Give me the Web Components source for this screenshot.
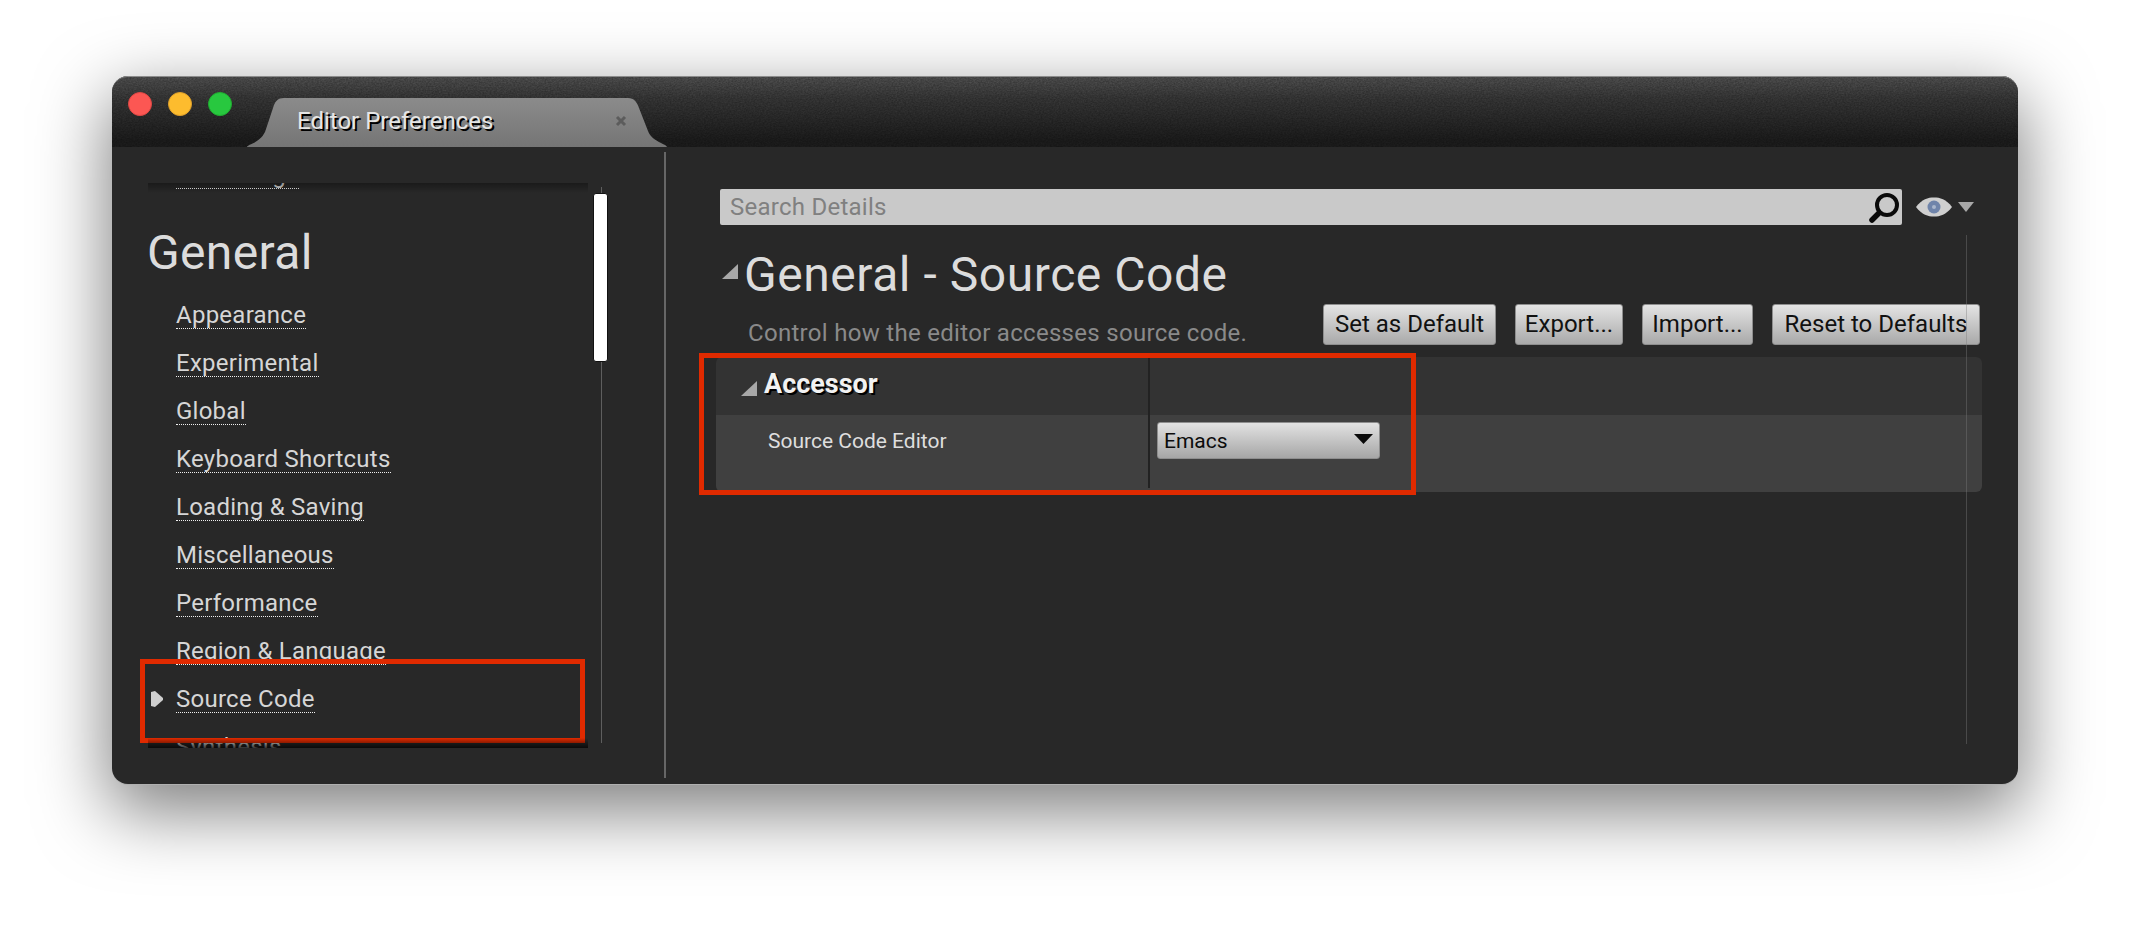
<!doctype html>
<html>
<head>
<meta charset="utf-8">
<title>Editor Preferences</title>
<style>
html, body { margin: 0; height: 100%; background: #fff; }
body { font-family: Roboto, "Liberation Sans", sans-serif; overflow: hidden; }
</style>
</head>
<body>
<app-window>
  <title-bar slot="title">
    <window-tab>Editor Preferences</window-tab>
  </title-bar>
  <pref-sidebar slot="side">
    <pref-link>Recordings</pref-link>
    <pref-heading>General</pref-heading>
    <pref-link>Appearance</pref-link>
    <pref-link>Experimental</pref-link>
    <pref-link>Global</pref-link>
    <pref-link>Keyboard Shortcuts</pref-link>
    <pref-link>Loading &amp; Saving</pref-link>
    <pref-link>Miscellaneous</pref-link>
    <pref-link>Performance</pref-link>
    <pref-link>Region &amp; Language</pref-link>
    <pref-link selected>Source Code</pref-link>
    <pref-link>Synthesis</pref-link>
  </pref-sidebar>
  <details-panel slot="main">
    <search-bar placeholder="Search Details"></search-bar>
    <section-title heading="General - Source Code" description="Control how the editor accesses source code.">
      <ue-button style="width:173px">Set as Default</ue-button>
      <ue-button style="width:108px">Export...</ue-button>
      <ue-button style="width:111px">Import...</ue-button>
      <ue-button style="width:208px">Reset to Defaults</ue-button>
    </section-title>
    <prop-table heading="Accessor" label="Source Code Editor">
      <ue-select>Emacs</ue-select>
    </prop-table>
  </details-panel>
</app-window>

<script>
const tri = `<svg width="16" height="15" viewBox="0 0 16 15"><path d="M16 0V15H0Z" fill="#a8a8a8"/></svg>`;

class AppWindow extends HTMLElement {
  constructor() {
    super();
    this.attachShadow({ mode: 'open' });
  }
  connectedCallback() {
    this.shadowRoot.innerHTML = `<style>
:host {
  display: flex;
  flex-direction: column;
  position: relative;
  width: 1906px;
  height: 708px;
  margin: 76px 0 0 112px;
  border-radius: 16px;
  background: #282828;
  box-shadow: 0 1px 0 #b0b0b0, 0 24px 70px 4px rgba(0,0,0,.5);
}
.body { display: flex; flex: 1; min-height: 0; }
.split { width: 2px; margin: 5px 0 6px; background: #666; }
.mark { position: absolute; border: 5px solid #e02a00; box-sizing: border-box; pointer-events: none; }
.a { left: 28px; top: 583px; width: 445px; height: 84px; }
.b { left: 587px; top: 277px; width: 717px; height: 142px; }
</style>
<slot name="title"></slot>
<div class="body">
  <slot name="side"></slot>
  <div class="split"></div>
  <slot name="main"></slot>
</div>
<div class="mark a"></div>
<div class="mark b"></div>`;
  }
}

class TitleBar extends HTMLElement {
  constructor() {
    super();
    this.attachShadow({ mode: 'open' });
  }
  connectedCallback() {
    this.shadowRoot.innerHTML = `<style>
:host {
  display: flex;
  align-items: flex-end;
  position: relative;
  height: 71px;
  flex: none;
  box-sizing: border-box;
  border-radius: 16px 16px 0 0;
  border-top: 1px solid #8c8c8c;
  background: linear-gradient(#565656, #3c3c3c 30%, #1f1f1f 90%);
  overflow: hidden;
}
.grain { position: absolute; inset: 0; width: 100%; height: 100%; opacity: .3; }
.lights { display: flex; gap: 16px; align-self: flex-start; margin: 15px 16px 0 16px; position: relative; }
.lights i { width: 24px; height: 24px; border-radius: 50%; box-sizing: border-box; }
.r { background: #fc5753; border: 1px solid #df4744; }
.y { background: #fdbc2e; border: 1px solid #de9f2a; }
.g { background: #28c83f; border: 1px solid #1fad30; }
::slotted(*) { position: relative; }
</style>
<svg class="grain"><filter id="n"><feTurbulence type="fractalNoise" baseFrequency="0.55 0.75" numOctaves="2"/><feColorMatrix values="0 0 0 0 0  0 0 0 0 0  0 0 0 0 0  1.500 0 0 0 -.2"/></filter><rect width="100%" height="100%" filter="url(#n)"/></svg>
<div class="lights"><i class="r"></i><i class="y"></i><i class="g"></i></div>
<slot></slot>`;
  }
}

class WindowTab extends HTMLElement {
  constructor() {
    super();
    this.attachShadow({ mode: 'open' });
  }
  connectedCallback() {
    this.shadowRoot.innerHTML = `<style>
:host {
  display: flex;
  align-items: center;
  justify-content: space-between;
  box-sizing: border-box;
  width: 420px;
  height: 49px;
  margin-left: -1px;
  padding: 0 40px 4px 50px;
  color: #e6e6e6;
  font-size: 24px;
  text-shadow: 2px 2px 0 #000;
  background: linear-gradient(#8b8b8b, #757575);
  clip-path: path("M0 49 C0 46 12 46 18 34 L26 10 C28 3 31 0 37 0 L381 0 C387 0 390 4 392 10 L401 33 C405 44 420 46 420 49 Z");
}
svg { flex: none; }
</style>
<span><slot></slot></span>
<svg width="12" height="12" viewBox="0 0 12 12"><path d="M2 2L10 10M10 2L2 10" stroke="#5c5c5c" stroke-width="3"/></svg>`;
  }
}

class PrefSidebar extends HTMLElement {
  constructor() {
    super();
    this.attachShadow({ mode: 'open' });
  }
  connectedCallback() {
    this.shadowRoot.innerHTML = `<style>
:host {
  display: flex;
  flex: none;
  position: relative;
  width: 552px;
  box-sizing: border-box;
  padding: 36px 0 36px 36px;
}
.view { position: relative; width: 440px; overflow: hidden; }
.list { margin-top: -21px; }
.view::before, .view::after {
  content: "";
  position: absolute;
  left: 0;
  right: 0;
  height: 10px;
  z-index: 1;
}
.view::before { top: 0; background: linear-gradient(rgba(0,0,0,.35), transparent); }
.view::after { bottom: 0; background: linear-gradient(transparent, rgba(0,0,0,.75)); }
.track { position: relative; width: 1px; margin: 4px 0 5px 13px; background: #5e5e5e; }
.thumb {
  position: absolute;
  left: -8px;
  top: 6px;
  width: 13px;
  height: 167px;
  background: #fff;
  border: 1px solid #111;
  border-radius: 3px;
}
</style>
<div class="view"><div class="list"><slot></slot></div></div>
<div class="track"><div class="thumb"></div></div>`;
  }
}

class PrefHeading extends HTMLElement {
  constructor() {
    super();
    this.attachShadow({ mode: 'open' });
  }
  connectedCallback() {
    this.shadowRoot.innerHTML = `<style>
:host {
  display: block;
  margin: 15px 0 21px -1px;
  font-size: 48px;
  line-height: 56px;
  letter-spacing: .35px;
  color: #dcdcdc;
}
</style><slot></slot>`;
  }
}

class PrefLink extends HTMLElement {
  constructor() {
    super();
    this.attachShadow({ mode: 'open' });
  }
  connectedCallback() {
    this.shadowRoot.innerHTML = `<style>
:host {
  display: block;
  position: relative;
  height: 48px;
  padding-left: 28px;
  color: #d6d6d6;
  font-size: 24px;
  line-height: 26px;
  letter-spacing: .25px;
}
span { display: inline-block; border-bottom: 1px dotted #f0f0f0; }
svg { position: absolute; left: 3px; top: 5px; }
</style>
${this.hasAttribute('selected') ? `<svg width="12" height="16" viewBox="0 0 12 16"><path d="M0 1L4 0L12 7V9L4 16L0 15Z" fill="#cfcfcf"/></svg>` : ''}
<span><slot></slot></span>`;
  }
}

class DetailsPanel extends HTMLElement {
  constructor() {
    super();
    this.attachShadow({ mode: 'open' });
  }
  connectedCallback() {
    this.shadowRoot.innerHTML = `<style>
:host {
  display: block;
  position: relative;
  flex: 1;
  min-width: 0;
  box-sizing: border-box;
  padding: 42px 36px 0 50px;
}
.rule {
  position: absolute;
  left: 1300px;
  top: 88px;
  width: 1px;
  height: 509px;
  background: rgba(125,125,125,.4);
}
</style>
<slot></slot>
<div class="rule"></div>`;
  }
}

class SearchBar extends HTMLElement {
  constructor() {
    super();
    this.attachShadow({ mode: 'open' });
  }
  connectedCallback() {
    this.shadowRoot.innerHTML = `<style>
:host { display: flex; align-items: center; margin-left: 4px; height: 36px; }
.box {
  display: flex;
  align-items: center;
  justify-content: space-between;
  width: 1182px;
  height: 36px;
  box-sizing: border-box;
  padding: 0 1px 0 10px;
  background: #c9c9c9;
  border-radius: 2px;
  color: #808080;
  font-size: 24px;
  letter-spacing: .25px;
}
.eye { margin-left: 13px; filter: blur(.6px); }
.caret { margin-left: 5px; filter: blur(.4px); }
</style>
<div class="box">
  <span>${this.getAttribute('placeholder')}</span>
  <svg width="34" height="34" viewBox="0 0 34 34"><circle cx="20" cy="15" r="10" fill="none" stroke="#0a0a0a" stroke-width="4"/><path d="M12 23L5 30" stroke="#0a0a0a" stroke-width="5.500" stroke-linecap="round"/></svg>
</div>
<svg class="eye" width="38" height="22" viewBox="0 0 38 22"><path d="M1 11C7 3 13 1.500 19 1.500S31 3 37 11C31 19 25 20.500 19 20.500S7 19 1 11Z" fill="#cfcfcf"/><circle cx="19" cy="11" r="6.500" fill="#6f84aa"/><circle cx="19" cy="11" r="2" fill="#a9b6cc"/></svg>
<svg class="caret" width="16" height="10" viewBox="0 0 16 10"><path d="M0 0H16L8 10Z" fill="#a8a8a8"/></svg>`;
  }
}

class SectionTitle extends HTMLElement {
  constructor() {
    super();
    this.attachShadow({ mode: 'open' });
  }
  connectedCallback() {
    this.shadowRoot.innerHTML = `<style>
:host { display: block; margin-top: 22px; }
.head { display: flex; padding-left: 6px; height: 57px; }
.head svg { margin-top: 17px; flex: none; }
h1 {
  margin: 0 0 0 6px;
  font-size: 48px;
  font-weight: 400;
  line-height: 56px;
  letter-spacing: .55px;
  color: #dcdcdc;
}
.row { display: flex; justify-content: space-between; padding-right: 2px; height: 41px; }
p {
  margin: 15px 0 0 32px;
  font-size: 24px;
  line-height: 28px;
  letter-spacing: .3px;
  color: #8a8a8a;
}
.btns { display: flex; gap: 19px; }
</style>
<div class="head">${tri}<h1>${this.getAttribute('heading')}</h1></div>
<div class="row">
  <p>${this.getAttribute('description')}</p>
  <div class="btns"><slot></slot></div>
</div>`;
  }
}

class UeButton extends HTMLElement {
  constructor() {
    super();
    this.attachShadow({ mode: 'open' });
  }
  connectedCallback() {
    this.shadowRoot.innerHTML = `<style>
:host {
  display: block;
  height: 41px;
  box-sizing: border-box;
  text-align: center;
  white-space: nowrap;
  font-size: 24px;
  line-height: 39px;
  color: #111;
  background: linear-gradient(#e4e4e4, #a9a9a9);
  border: 1px solid #8e8e8e;
  border-radius: 3px;
}
</style><slot></slot>`;
  }
}

class PropTable extends HTMLElement {
  constructor() {
    super();
    this.attachShadow({ mode: 'open' });
  }
  connectedCallback() {
    this.shadowRoot.innerHTML = `<style>
:host { display: block; margin-top: 12px; border-radius: 6px; overflow: hidden; }
.row { display: flex; }
.head { height: 58px; background: #333; }
.body { height: 77px; background: #404040; }
.name { box-sizing: border-box; border-right: 2px solid #222; flex: none; width: 434px; }
.head .name {
  display: flex;
  padding: 13px 0 0 25px;
  gap: 7px;
  color: #f2f2f2;
  font-size: 27px;
  font-weight: 700;
  line-height: 28px;
  text-shadow: 2px 2px 0 #000;
}
.head svg { margin-top: 11px; flex: none; }
.body .name {
  height: 73px;
  padding: 14px 0 0 52px;
  color: #dedede;
  font-size: 21px;
  line-height: 24px;
}
.value { padding: 7px 0 0 7px; }
</style>
<div class="row head"><div class="name">${tri}<span>${this.getAttribute('heading')}</span></div></div>
<div class="row body">
  <div class="name">${this.getAttribute('label')}</div>
  <div class="value"><slot></slot></div>
</div>`;
  }
}

class UeSelect extends HTMLElement {
  constructor() {
    super();
    this.attachShadow({ mode: 'open' });
  }
  connectedCallback() {
    this.shadowRoot.innerHTML = `<style>
:host {
  display: flex;
  align-items: center;
  justify-content: space-between;
  box-sizing: border-box;
  width: 223px;
  height: 37px;
  padding: 0 6px 0 6px;
  font-size: 21px;
  color: #0c0c0c;
  background: linear-gradient(#e2e2e2, #a6a6a6);
  border: 1px solid #8e8e8e;
  border-radius: 3px;
}
svg { margin-top: -4px; }
</style>
<span><slot></slot></span>
<svg width="19" height="10" viewBox="0 0 19 10"><path d="M0 0H19L9.500 10Z" fill="#0a0a0a"/></svg>`;
  }
}

customElements.define('app-window', AppWindow);
customElements.define('title-bar', TitleBar);
customElements.define('window-tab', WindowTab);
customElements.define('pref-sidebar', PrefSidebar);
customElements.define('pref-heading', PrefHeading);
customElements.define('pref-link', PrefLink);
customElements.define('details-panel', DetailsPanel);
customElements.define('search-bar', SearchBar);
customElements.define('section-title', SectionTitle);
customElements.define('ue-button', UeButton);
customElements.define('prop-table', PropTable);
customElements.define('ue-select', UeSelect);
</script>
</body>
</html>
